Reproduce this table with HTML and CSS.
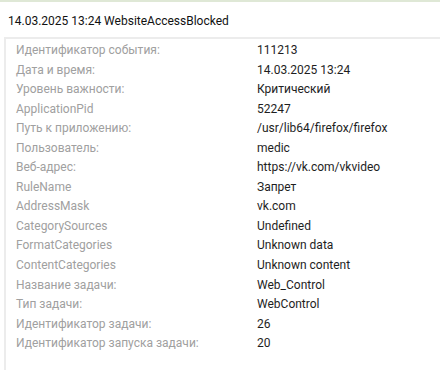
FILE: index.html
```html
<!DOCTYPE html>
<html lang="ru">
<head>
    <meta charset="UTF-8">
    <title>WebsiteAccessBlocked</title>
    <link rel="stylesheet" href="styles.css">
</head>
<body>
    <div class="event">
        <div class="event-title">14.03.2025 13:24 WebsiteAccessBlocked</div>

        <div class="details">
            <div class="row"><span class="label">Идентификатор события:</span><span class="value">111213</span></div>
            <div class="row"><span class="label">Дата и время:</span><span class="value">14.03.2025 13:24</span></div>
            <div class="row"><span class="label">Уровень важности:</span><span class="value">Критический</span></div>
            <div class="row"><span class="label">ApplicationPid</span><span class="value">52247</span></div>
            <div class="row"><span class="label">Путь к приложению:</span><span class="value">/usr/lib64/firefox/firefox</span></div>
            <div class="row"><span class="label">Пользователь:</span><span class="value">medic</span></div>
            <div class="row"><span class="label">Веб-адрес:</span><span class="value">https://vk.com/vkvideo</span></div>
            <div class="row"><span class="label">RuleName</span><span class="value">Запрет</span></div>
            <div class="row"><span class="label">AddressMask</span><span class="value">vk.com</span></div>
            <div class="row"><span class="label">CategorySources</span><span class="value">Undefined</span></div>
            <div class="row"><span class="label">FormatCategories</span><span class="value">Unknown data</span></div>
            <div class="row"><span class="label">ContentCategories</span><span class="value">Unknown content</span></div>
            <div class="row"><span class="label">Название задачи:</span><span class="value">Web_Control</span></div>
            <div class="row"><span class="label">Тип задачи:</span><span class="value">WebControl</span></div>
            <div class="row"><span class="label">Идентификатор задачи:</span><span class="value">26</span></div>
            <div class="row"><span class="label">Идентификатор запуска задачи:</span><span class="value">20</span></div>
        </div>
    </div>
</body>
</html>
```

FILE: styles.css
```css
* {
    margin: 0;
    padding: 0;
    box-sizing: border-box;
}

body {
    font-family: Roboto, 'Noto Sans', sans-serif;
    background: #fff;
    color: #222;
    border-top: 2px solid #dfe8d6;
    height: 100vh;
    overflow: hidden;
}

.event {
    display: flex;
    flex-direction: column;
    height: 100%;
}

.event-title {
    font-size: 12px;
    color: #111;
    padding: 12px 8px 0;
    height: 35px;
}

.details {
    flex: 1;
    margin-left: 4px;
    border-top: 2px solid #ececec;
    border-left: 2px solid #ececec;
    padding: 2px 0 0 10px;
    font-size: 12px;
}

.row {
    display: grid;
    grid-template-columns: 241px 1fr;
    line-height: 19.55px;
}

.label {
    color: #a0a0a0;
}

.value {
    color: #1e1e1e;
}
```
